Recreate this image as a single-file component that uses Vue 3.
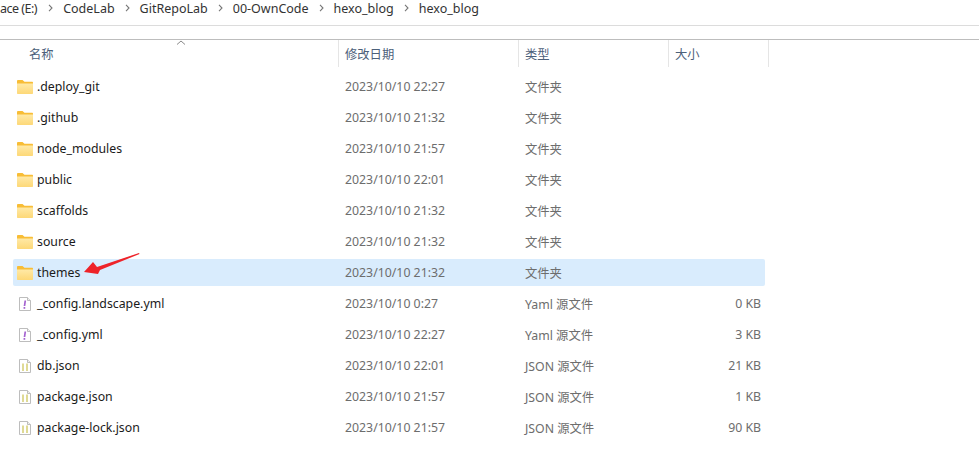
<script setup>
const crumbs = ['CodeLab', 'GitRepoLab', '00-OwnCode', 'hexo_blog', 'hexo_blog']
const rows = [
  { name: '.deploy_git', date: '2023/10/10 22:27', type: '文件夹', size: '', icon: 'folder' },
  { name: '.github', date: '2023/10/10 21:32', type: '文件夹', size: '', icon: 'folder' },
  { name: 'node_modules', date: '2023/10/10 21:57', type: '文件夹', size: '', icon: 'folder' },
  { name: 'public', date: '2023/10/10 22:01', type: '文件夹', size: '', icon: 'folder' },
  { name: 'scaffolds', date: '2023/10/10 21:32', type: '文件夹', size: '', icon: 'folder' },
  { name: 'source', date: '2023/10/10 21:32', type: '文件夹', size: '', icon: 'folder' },
  { name: 'themes', date: '2023/10/10 21:32', type: '文件夹', size: '', icon: 'folder', selected: true },
  { name: '_config.landscape.yml', date: '2023/10/10 0:27', type: 'Yaml 源文件', size: '0 KB', icon: 'yaml' },
  { name: '_config.yml', date: '2023/10/10 22:27', type: 'Yaml 源文件', size: '3 KB', icon: 'yaml' },
  { name: 'db.json', date: '2023/10/10 22:01', type: 'JSON 源文件', size: '21 KB', icon: 'json' },
  { name: 'package.json', date: '2023/10/10 21:57', type: 'JSON 源文件', size: '1 KB', icon: 'json' },
  { name: 'package-lock.json', date: '2023/10/10 21:57', type: 'JSON 源文件', size: '90 KB', icon: 'json' }
]
</script>

<template>
  <div class="explorer">
    <nav class="crumbs">
      <span class="crumb first">ace (E:)</span>
      <template v-for="(c, i) in crumbs" :key="i">
        <svg class="chev" width="5" height="8" viewBox="0 0 5 8"><path d="M1 .8 4 4 1 7.2" fill="none" stroke="#777" stroke-width="1.1" /></svg>
        <span class="crumb">{{ c }}</span>
      </template>
    </nav>
    <div class="spacer"></div>
    <header class="head">
      <svg class="sort" width="10" height="5" viewBox="0 0 10 5"><path d="M1 4.500 5 1l4 3.500" fill="none" stroke="#8a8a8a" stroke-width="1" /></svg>
      <div class="hcol c-name">名称</div>
      <div class="hcol c-date">修改日期</div>
      <div class="hcol c-type">类型</div>
      <div class="hcol c-size">大小</div>
    </header>
    <div class="list">
      <div v-for="r in rows" :key="r.name" class="row" :class="{ selected: r.selected }">
        <div class="cell c-name name">
          <svg v-if="r.icon === 'folder'" class="ico" width="16" height="14" viewBox="0 0 16 14">
            <defs>
              <linearGradient id="fbody" x1="0" y1="0" x2="0" y2="1">
                <stop offset="0" stop-color="#ffe9a6" />
                <stop offset="1" stop-color="#fdd877" />
              </linearGradient>
            </defs>
            <path d="M0 1C0 .5.5 0 1 0h4.500L7.500 1.800H15c.6 0 1 .4 1 1V5H0z" fill="#f8bd36" />
            <path d="M0 3.600h16v9.400c0 .6-.4 1-1 1H1c-.6 0-1-.4-1-1z" fill="url(#fbody)" />
          </svg>
          <svg v-else class="ico" width="16" height="16" viewBox="0 0 16 16">
            <path d="M2.500 1.500h8l3 3v10h-11z" fill="#fff" stroke="#bdbdbd" />
            <path d="M10.500 1.500v3h3" fill="#f0f0f0" stroke="#bdbdbd" />
            <template v-if="r.icon === 'yaml'">
              <path d="M8.300 4.500 7.500 10" stroke="#a463d0" stroke-width="1.700" />
              <path d="M7.400 11v1.800" stroke="#a463d0" stroke-width="1.700" />
            </template>
            <template v-else>
              <path d="M6 5.500v7.500" stroke="#dcd68a" stroke-width="1.800" />
              <path d="M10 5.500v7.500" stroke="#dcd68a" stroke-width="1.800" />
            </template>
          </svg>
          <span>{{ r.name }}</span>
        </div>
        <div class="cell c-date muted">{{ r.date }}</div>
        <div class="cell c-type muted">{{ r.type }}</div>
        <div class="cell c-size muted size">{{ r.size }}</div>
      </div>
    </div>
    <svg class="arrow" width="58" height="26" viewBox="0 0 58 26">
      <path d="M56 2 56.500 3 17 19 15 23 1 21 10 11 14 16Z" fill="#ee2329" />
    </svg>
  </div>
</template>

<style scoped>
.explorer {
  position: relative;
  width: 979px;
  height: 453px;
  background: #fff;
  overflow: hidden;
  font-family: "Noto Sans", "Noto Sans CJK SC", sans-serif;
  font-size: 12.300px;
  color: #1e1e1e;
}
.crumbs {
  display: flex;
  align-items: center;
  box-sizing: border-box;
  height: 26px;
  padding-bottom: 9px;
  border-bottom: 1px solid #dcdcdc;
  font-size: 12.500px;
  color: #333;
}
.crumb.first { letter-spacing: -0.5px; margin-right: 1px; }
.chev { margin: 0 10px 0 10px; flex: none; }
.spacer {
  height: 13px;
  border-bottom: 1px solid #bdbdbd;
}
.head {
  position: relative;
  display: flex;
  height: 27px;
  color: #4c607a;
}
.sort { position: absolute; left: 176px; top: 0; }
.hcol {
  display: flex;
  align-items: center;
  box-sizing: border-box;
  border-right: 1px solid #e5e5e5;
  padding-left: 6px;
}
.head .c-name { width: 339px; padding-left: 29px; }
.head .c-date { width: 180px; }
.head .c-type { width: 150px; }
.head .c-size { width: 100px; }
.list {
  display: flex;
  flex-direction: column;
  gap: 4px;
  padding: 6px 214px 0 13px;
}
.row {
  display: flex;
  align-items: center;
  height: 27px;
  border-radius: 2px;
}
.row.selected { background: #d9ecfd; }
.cell { box-sizing: border-box; white-space: nowrap; }
.name { display: flex; align-items: center; color: #1a1a1a; }
.ico { margin: 0 4px 0 4px; flex: none; }
.c-name { width: 326px; }
.c-date { width: 180px; padding-left: 6px; }
.c-type { width: 150px; padding-left: 6px; }
.c-size { width: 96px; }
.size { text-align: right; padding-right: 4px; }
.muted { color: #6d6d6d; }
.arrow { position: absolute; left: 83px; top: 251px; }
</style>
